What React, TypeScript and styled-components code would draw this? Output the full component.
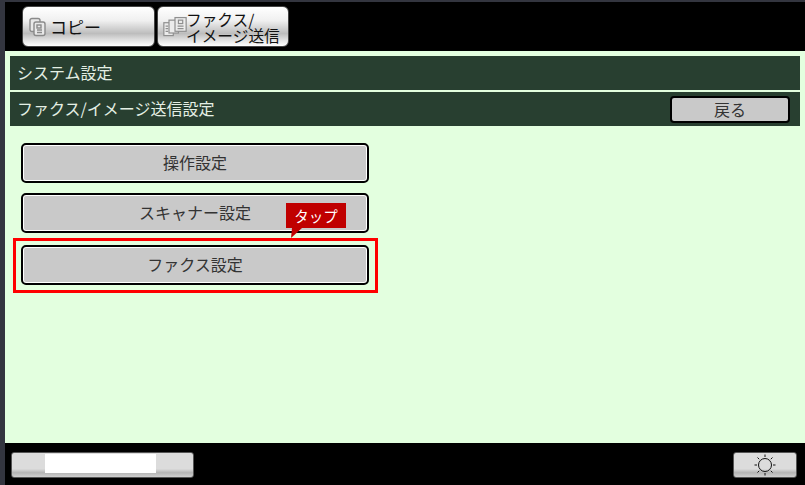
import styled, { createGlobalStyle } from "styled-components";

const GlobalStyle = createGlobalStyle`
  html, body {
    margin: 0;
    padding: 0;
    background: #000000;
  }
`;

const Screen = styled.div`
  display: flex;
  flex-direction: column;
  position: relative;
  width: 805px;
  height: 485px;
  overflow: hidden;
  background: #000000;
  font-family: "Noto Sans CJK JP", "Liberation Sans", sans-serif;
  border-left: 5px solid #33353f;
  border-top: 2px solid #33353f;
  box-sizing: border-box;
`;

const TabBar = styled.div`
  display: flex;
  gap: 2px;
  height: 49px;
  padding: 4px 0 0 17px;
  box-sizing: border-box;
`;

const Tab = styled.div<{ $w: number; $pad: number }>`
  display: flex;
  align-items: center;
  box-sizing: border-box;
  width: ${(p) => p.$w}px;
  height: 41px;
  padding-left: ${(p) => p.$pad}px;
  border-radius: 6px;
  border: 1px solid #444444;
  background: linear-gradient(
    #ffffff 0%,
    #f0f0f0 35%,
    #bdbdbd 68%,
    #e4e4e4 86%,
    #ffffff 100%
  );
  color: #111111;
  white-space: nowrap;
`;

const TabLabel = styled.span`
  margin-left: 3px;
  font-size: 17px;
  line-height: 17px;
`;

const TabLabelTwoLines = styled.span`
  margin: 2px 0 0 -1px;
  font-size: 15.7px;
  line-height: 16px;
`;

const Panel = styled.div`
  display: flex;
  flex-direction: column;
  flex: none;
  height: 392px;
  padding: 5px 5px 0 5px;
  box-sizing: border-box;
  background: #e3ffdf;
`;

const TitleBar = styled.div`
  display: flex;
  align-items: center;
  justify-content: space-between;
  box-sizing: border-box;
  height: 34px;
  margin-bottom: 2px;
  padding: 0 10px 0 7px;
  background: #283f30;
  color: #e4efe4;
  font-size: 16px;
`;

const TitleText = styled.span`
  margin-top: -3px;
`;

const BackButton = styled.div`
  display: flex;
  align-items: center;
  justify-content: center;
  box-sizing: border-box;
  width: 120px;
  height: 27px;
  border: 2px solid #000000;
  border-radius: 4px;
  background: #c9c9c9;
  color: #333333;
  font-size: 16px;
`;

const MenuList = styled.div`
  display: flex;
  flex-direction: column;
  position: relative;
  padding: 15px 0 0 11px;
`;

const MenuButton = styled.div<{ $gap?: number }>`
  display: flex;
  align-items: center;
  justify-content: center;
  box-sizing: border-box;
  width: 348px;
  height: 40px;
  margin-bottom: ${(p) => p.$gap ?? 0}px;
  padding-bottom: 2px;
  border: 2px solid #000000;
  border-radius: 5px;
  background: #c9c9c9;
  box-shadow: inset 0 0 0 1px #ffffff;
  color: #333333;
  font-size: 16px;
`;

const Highlight = styled.div`
  box-sizing: border-box;
  width: 365px;
  height: 55px;
  margin-left: -8px;
  padding: 4px 0 0 5px;
  border: 3px solid #ff0000;
`;

const Callout = styled.div`
  position: absolute;
  left: 276px;
  top: 75px;
  display: flex;
  align-items: center;
  justify-content: center;
  width: 60px;
  height: 25px;
  background: #c00000;
  color: #ffffff;
  font-size: 14.5px;
`;

const CalloutTail = styled.svg`
  position: absolute;
  left: 5px;
  top: 25px;
`;

const Footer = styled.div`
  display: flex;
  align-items: flex-start;
  justify-content: space-between;
  flex: 1;
  padding: 9px 8px 0 6px;
`;

const FooterButton = styled.div<{ $w: number }>`
  display: flex;
  align-items: center;
  justify-content: center;
  box-sizing: border-box;
  width: ${(p) => p.$w}px;
  height: 26px;
  border: 1px solid #555555;
  border-radius: 3px;
  background: linear-gradient(#dcdcdc 0%, #dcdcdc 66%, #b4b4b4 82%, #cfcfcf 100%);
`;

const NameBox = styled.div`
  width: 111px;
  height: 19px;
  margin: -3px 0 0 -4px;
  background: #ffffff;
`;

const CopyIcon = () => (
  <svg width="18" height="20" viewBox="0 0 18 20" fill="#e8e8e8" stroke="#8a8a8a" strokeWidth="1.4">
    <rect x="1" y="1.5" width="10" height="13" rx="2" />
    <rect x="5" y="5" width="11" height="13.5" rx="2" />
    <rect x="8" y="8" width="4" height="3" fill="none" />
    <path d="M8 13h5M8 15.5h5" fill="none" />
  </svg>
);

const FaxIcon = () => (
  <svg width="24" height="22" viewBox="0 0 28 24" fill="#ececec" stroke="#8f8f8f" strokeWidth="1.4">
    <rect x="1" y="7" width="11" height="15" />
    <rect x="7" y="4" width="11" height="15" />
    <rect x="14" y="1" width="13" height="16" />
    <rect x="18" y="4" width="5" height="4" fill="none" />
    <path d="M17 11h7M17 14h7M3 11h3M3 14h3M3 17h3" fill="none" />
  </svg>
);

const SunIcon = () => (
  <svg width="22" height="22" viewBox="0 0 22 22" fill="none" stroke="#111111" strokeWidth="1">
    <circle cx="11" cy="11" r="6.5" />
    <path d="M11 0.5v2.5M11 19v2.5M0.5 11h2.5M19 11h2.5M3.5 3.5l1.7 1.7M16.8 16.8l1.7 1.7M3.5 18.5l1.7-1.7M16.8 5.2l1.7-1.7" />
  </svg>
);

export default function App() {
  return (
    <Screen>
      <GlobalStyle />
      <TabBar>
        <Tab $w={133} $pad={6}>
          <CopyIcon />
          <TabLabel>コピー</TabLabel>
        </Tab>
        <Tab $w={132} $pad={5}>
          <FaxIcon />
          <TabLabelTwoLines>
            ファクス/
            <br />
            イメージ送信
          </TabLabelTwoLines>
        </Tab>
      </TabBar>
      <Panel>
        <TitleBar>
          <TitleText>システム設定</TitleText>
        </TitleBar>
        <TitleBar>
          <TitleText>ファクス/イメージ送信設定</TitleText>
          <BackButton>戻る</BackButton>
        </TitleBar>
        <MenuList>
          <MenuButton $gap={10}>操作設定</MenuButton>
          <MenuButton $gap={5}>スキャナー設定</MenuButton>
          <Highlight>
            <MenuButton>ファクス設定</MenuButton>
          </Highlight>
          <Callout>
            タップ
            <CalloutTail width="12" height="10" viewBox="0 0 12 10">
              <polygon points="1,0 11,0 0,10" fill="#c00000" />
            </CalloutTail>
          </Callout>
        </MenuList>
      </Panel>
      <Footer>
        <FooterButton $w={183}>
          <NameBox />
        </FooterButton>
        <FooterButton $w={64}>
          <SunIcon />
        </FooterButton>
      </Footer>
    </Screen>
  );
}
